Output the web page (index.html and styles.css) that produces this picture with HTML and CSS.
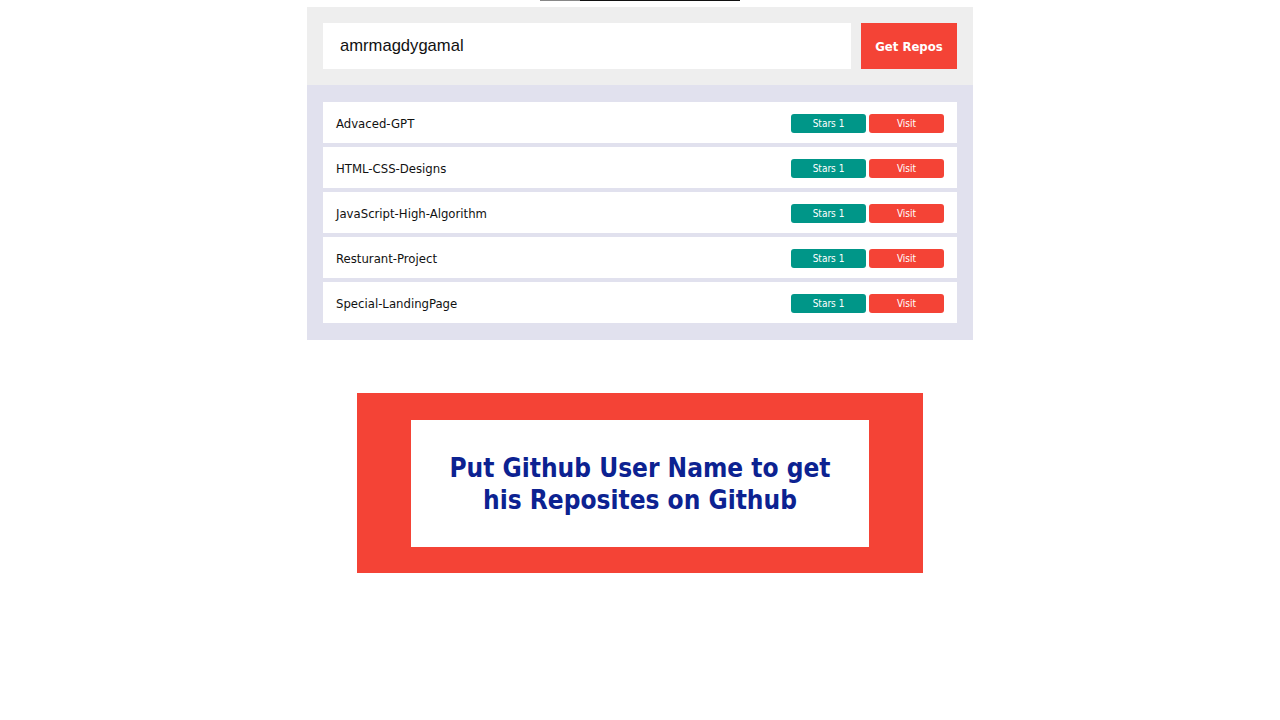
FILE: index.html
```html
<!DOCTYPE html>
<html>
<head>
<meta charset="utf-8">
<link rel="stylesheet" href="styles.css">
</head>
<body>
<div class="topline"></div>
<div class="app">
  <div class="search">
    <div class="input">amrmagdygamal</div>
    <div class="get-btn">Get Repos</div>
  </div>
  <div class="repos">
    <div class="repo"><span class="name">Advaced-GPT</span><span class="actions"><span class="stars">Stars 1</span><span class="visit">Visit</span></span></div>
    <div class="repo"><span class="name">HTML-CSS-Designs</span><span class="actions"><span class="stars">Stars 1</span><span class="visit">Visit</span></span></div>
    <div class="repo"><span class="name">JavaScript-High-Algorithm</span><span class="actions"><span class="stars">Stars 1</span><span class="visit">Visit</span></span></div>
    <div class="repo"><span class="name">Resturant-Project</span><span class="actions"><span class="stars">Stars 1</span><span class="visit">Visit</span></span></div>
    <div class="repo"><span class="name">Special-LandingPage</span><span class="actions"><span class="stars">Stars 1</span><span class="visit">Visit</span></span></div>
  </div>
</div>
<div class="notice">
  <div class="notice-inner">Put Github User Name to get<br>his Reposites on Github</div>
</div>
</body>
</html>
```
FILE: styles.css
```css
html, body {
  margin: 0;
  padding: 0;
  background: #fff;
}
body {
  font-family: "DejaVu Sans Condensed", "DejaVu Sans", Tahoma, sans-serif;
}
.topline {
  width: 200px;
  height: 1px;
  margin: 0 auto;
  background: linear-gradient(to right, #888 0, #888 40px, #111 40px);
}
.app {
  width: 666px;
  margin: 6px auto 0;
}
.search {
  background: #eeeeee;
  padding: 16px;
  display: flex;
  gap: 10px;
}
.input {
  flex: 1;
  height: 46px;
  background: #fff;
  display: flex;
  align-items: center;
  padding-left: 17px;
  font-family: "Liberation Sans", Arial, sans-serif;
  font-size: 16.6px;
  color: #111;
}
.get-btn {
  width: 96px;
  height: 46px;
  background: #f44336;
  color: #fff;
  font-weight: bold;
  font-size: 13px;
  display: flex;
  align-items: center;
  justify-content: center;
}
.repos {
  background: #e1e1ee;
  padding: 17px 16px 17px;
  display: flex;
  flex-direction: column;
  gap: 4px;
}
.repo {
  background: #fff;
  height: 41px;
  box-sizing: border-box;
  padding: 2px 13px 0 13px;
  display: flex;
  align-items: center;
  justify-content: space-between;
}
.name {
  font-size: 13px;
  color: #111;
}
.actions {
  display: flex;
  gap: 3px;
}
.stars, .visit {
  width: 75px;
  height: 19px;
  border-radius: 3px;
  color: #fff;
  font-size: 10px;
  display: flex;
  align-items: center;
  justify-content: center;
}
.stars { background: #009688; }
.visit { background: #f44336; }
.notice {
  width: 566px;
  margin: 53px auto 0;
  background: #f44336;
  padding: 27px 54px 26px;
  box-sizing: border-box;
}
.notice-inner {
  background: #fff;
  height: 127px;
  display: flex;
  align-items: center;
  justify-content: center;
  text-align: center;
  color: #0c2291;
  font-weight: bold;
  font-size: 26px;
  line-height: 32px;
}
```
